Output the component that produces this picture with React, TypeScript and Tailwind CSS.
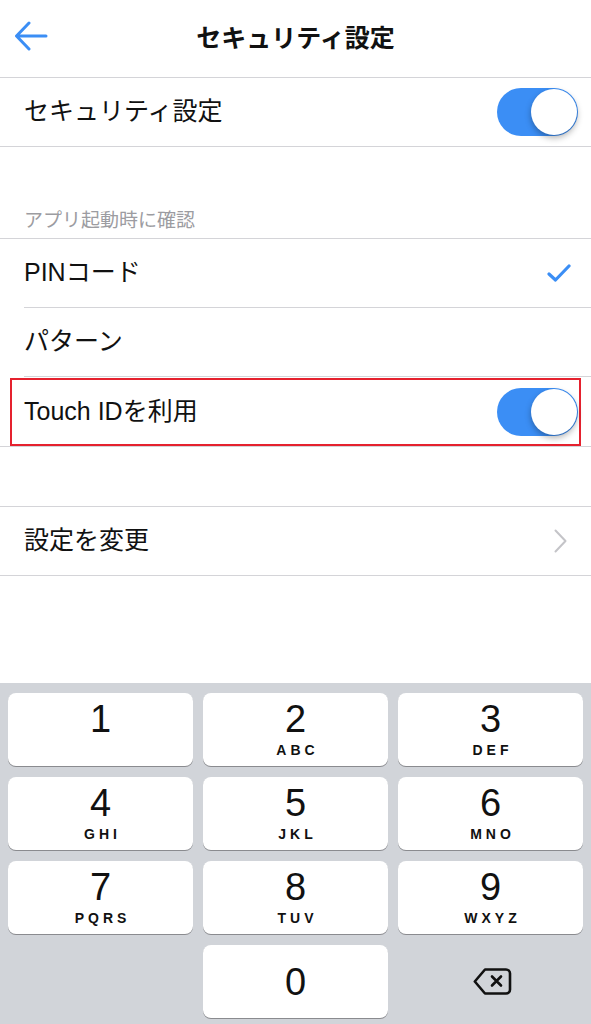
import React from 'react'

const font = { fontFamily: '"Liberation Sans", "Noto Sans CJK JP", sans-serif' }

function Toggle() {
  return (
    <div className="relative h-[48px] w-[81px] rounded-full bg-[#3b8ef5]">
      <div className="absolute right-[1px] top-[1px] h-[46px] w-[46px] rounded-full bg-white shadow-[0_3px_6px_rgba(0,0,0,0.3)]" />
    </div>
  )
}

function Check() {
  return (
    <svg width="24" height="20" viewBox="0 0 24 20" fill="none">
      <path d="M2 11 L8.5 17 L22 3" stroke="#3b8ef5" strokeWidth="3.2" strokeLinecap="round" strokeLinejoin="round" />
    </svg>
  )
}

function Chevron() {
  return (
    <svg width="13" height="24" viewBox="0 0 13 24" fill="none">
      <path d="M1.5 1.5 L11.5 12 L1.5 22.5" stroke="#c4c4c8" strokeWidth="2" strokeLinecap="round" strokeLinejoin="round" />
    </svg>
  )
}

function BackArrow() {
  return (
    <svg width="34" height="30" viewBox="0 0 34 30" fill="none">
      <path d="M32 15 H3 M15 2 L2.5 15 L15 28" stroke="#3b8ef5" strokeWidth="3" strokeLinecap="round" strokeLinejoin="round" />
    </svg>
  )
}

function DeleteIcon() {
  return (
    <svg width="39" height="27" viewBox="0 0 39 27" fill="none">
      <path
        d="M12 1.5 H33 A4 4 0 0 1 37 5.5 V21.5 A4 4 0 0 1 33 25.5 H12 L1.8 13.5 Z"
        stroke="#111"
        strokeWidth="2.6"
        strokeLinejoin="round"
      />
      <path d="M19 8.5 L28 17.5 M28 8.5 L19 17.5" stroke="#111" strokeWidth="2.6" strokeLinecap="round" />
    </svg>
  )
}

const keys = [
  { d: '1', l: '' },
  { d: '2', l: 'ABC' },
  { d: '3', l: 'DEF' },
  { d: '4', l: 'GHI' },
  { d: '5', l: 'JKL' },
  { d: '6', l: 'MNO' },
  { d: '7', l: 'PQRS' },
  { d: '8', l: 'TUV' },
  { d: '9', l: 'WXYZ' },
]

function Key({ d, l }: { d: string; l: string }) {
  return (
    <div className="flex h-[73px] flex-col items-center rounded-[8px] bg-white pt-[7px] shadow-[0_1px_0_#8a8b8f]">
      <span className="text-[38px] leading-[38px] text-[#111]">{d}</span>
      <span className="mt-[5px] h-[15px] pl-[4px] text-[14px] font-bold leading-[15px] tracking-[4px] text-[#111]">{l}</span>
    </div>
  )
}

export default function App() {
  return (
    <div className="flex h-[1024px] w-[591px] flex-col overflow-hidden bg-white text-[#111]" style={font}>
      {/* Nav bar */}
      <div className="grid h-[78px] grid-cols-[70px_1fr_70px] items-center border-b border-[#d4d4d8]">
        <div className="pl-[14px] pb-[5px]">
          <BackArrow />
        </div>
        <div className="text-center text-[25px] font-bold">セキュリティ設定</div>
        <div />
      </div>

      <div className="flex h-[69px] items-center justify-between border-b border-[#d4d4d8] pl-[24px] pr-[13px]">
        <span className="text-[25px]">セキュリティ設定</span>
        <Toggle />
      </div>

      <div className="flex h-[91px] items-end pb-[3px] pl-[24px]">
        <span className="text-[19px] text-[#9c9ca1]">アプリ起動時に確認</span>
      </div>

      <div className="border-t border-[#d4d4d8]">
        <div className="flex h-[68px] items-center justify-between pl-[24px] pr-[20px]">
          <span className="text-[25px]">PINコード</span>
          <Check />
        </div>
        <div className="ml-[24px] border-t border-[#d4d4d8]" />
        <div className="flex h-[68px] items-center pl-[24px]">
          <span className="text-[25px]">パターン</span>
        </div>
        <div className="ml-[24px] border-t border-[#d4d4d8]" />
        <div className="px-[10px] pt-[1px]">
          <div className="flex h-[68px] items-center justify-between border-2 border-[#e5212e] pl-[12px] pr-[1px]">
            <span className="text-[25px]">Touch IDを利用</span>
            <Toggle />
          </div>
        </div>
        <div className="border-t border-[#d4d4d8]" />
      </div>

      <div className="h-[59px]" />

      <div className="flex h-[70px] items-center justify-between border-y border-[#d4d4d8] pl-[24px] pr-[24px]">
        <span className="text-[25px]">設定を変更</span>
        <Chevron />
      </div>

      <div className="flex-1" />

      {/* Keypad */}
      <div className="h-[341px] bg-[#d1d4d9] px-[8px] pt-[10px]">
        <div className="grid grid-cols-3 gap-x-[10px] gap-y-[11px]">
          {keys.map((k) => (
            <Key key={k.d} d={k.d} l={k.l} />
          ))}
          <div />
          <div className="flex h-[73px] items-center justify-center rounded-[8px] bg-white shadow-[0_1px_0_#8a8b8f]">
            <span className="text-[38px] leading-[38px]">0</span>
          </div>
          <div className="flex items-center justify-center pl-[4px]">
            <DeleteIcon />
          </div>
        </div>
      </div>
    </div>
  )
}
